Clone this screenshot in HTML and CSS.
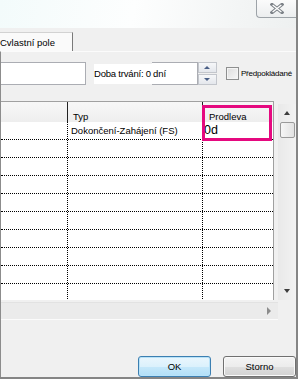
FILE: index.html
```html
<!DOCTYPE html>
<html lang="cs">
<head>
  <meta charset="UTF-8" />
  <title>Závislost úkolů</title>
  <link rel="stylesheet" href="styles.css">
</head>
<body>
  <div class="window">
    <div class="titlebar">
      <button class="close">
        <svg width="14" height="11" viewBox="0 0 14 11">
          <path d="M2 1.5 L12 9.5 M12 1.5 L2 9.5" stroke="#7d8288" stroke-width="3.4" stroke-linecap="square" />
          <path d="M2.6 2 L11.4 9 M11.4 2 L2.6 9" stroke="#ffffff" stroke-width="1.3" />
        </svg>
      </button>
    </div>

    <div class="tabs">
      <div class="tab">Cvlastní pole</div>
    </div>

    <div class="panel">
      <div class="fields">
        <div class="textbox wide"></div>
        <span class="label">Doba trvání: 0</span>
        <div class="textbox duration">dní</div>
        <div class="spinner">
          <span class="spin"><i class="tri up"></i></span>
          <span class="spin"><i class="tri down"></i></span>
        </div>
        <label class="check"><span class="box"></span>Předpokládané</label>
      </div>

      <div class="grid">
        <div class="grid-main">
          <div class="table">
            <div class="row head">
              <div class="cell"></div>
              <div class="cell">Typ</div>
              <div class="cell">Prodleva</div>
            </div>
            <div class="body">
              <div class="row">
                <div class="cell"></div>
                <div class="cell">Dokončení-Zahájení (FS)</div>
                <div class="cell lag">0d</div>
              </div>
              <div class="row"><div class="cell"></div><div class="cell"></div><div class="cell"></div></div>
              <div class="row"><div class="cell"></div><div class="cell"></div><div class="cell"></div></div>
              <div class="row"><div class="cell"></div><div class="cell"></div><div class="cell"></div></div>
              <div class="row"><div class="cell"></div><div class="cell"></div><div class="cell"></div></div>
              <div class="row"><div class="cell"></div><div class="cell"></div><div class="cell"></div></div>
              <div class="row"><div class="cell"></div><div class="cell"></div><div class="cell"></div></div>
              <div class="row"><div class="cell"></div><div class="cell"></div><div class="cell"></div></div>
              <div class="row"><div class="cell"></div><div class="cell"></div><div class="cell"></div></div>
              <div class="row"><div class="cell"></div><div class="cell"></div><div class="cell"></div></div>
            </div>
          </div>
          <div class="vscroll">
            <span class="sb-btn"><i class="arrow up"></i></span>
            <span class="thumb"></span>
            <span class="sb-track"></span>
            <span class="sb-btn"><i class="arrow down"></i></span>
          </div>
        </div>
        <div class="hscroll">
          <span class="sb-btn"><i class="arrow right"></i></span>
        </div>
        <div class="highlight"></div>
      </div>

      <div class="buttons">
        <button class="btn ok">OK</button>
        <button class="btn">Storno</button>
      </div>
    </div>
  </div>
</body>
</html>
```

FILE: styles.css
```css
:root {
  --face: #f0f0f0;
  --edge: #858585;
  --field-border: #abadb3;
  --pink: #e5097f;
}

body {
  margin: 0;
  font-family: 'Liberation Sans', Arial, sans-serif;
  font-size: 9.5px;
  color: #000;
  background: var(--face);
}

.window {
  width: 298px;
  height: 379px;
  box-sizing: border-box;
  border-right: 2px solid var(--edge);
  border-bottom: 2px solid var(--edge);
  overflow: hidden;
  background: var(--face);
}

/* titulek */
.titlebar {
  height: 28px;
  display: flex;
  justify-content: flex-end;
  align-items: flex-start;
  background: linear-gradient(100deg, #f3fbfb 0%, #fdfefe 45%, #f3f5f5 80%, #eef0f0 100%);
}

.close {
  width: 40px;
  height: 18px;
  padding: 0;
  border: 1px solid #9da3a8;
  border-top: none;
  border-right: none;
  border-radius: 0 0 0 4px;
  background: linear-gradient(#fbfbfb, #eceeef);
  display: flex;
  align-items: center;
  justify-content: center;
}

/* záložky */
.tabs {
  height: 23px;
  display: flex;
  align-items: flex-end;
  background: var(--face);
}

.tab {
  width: 73px;
  height: 19px;
  box-sizing: border-box;
  padding: 4px 0 0 0;
  background: #fafafa;
  border-top: 1px solid #d2d2d2;
  border-right: 1px solid #7a7a7a;
  white-space: nowrap;
}

.panel {
  border-top: 1px solid #fbfbfb;
  border-left: 1px solid #8c8c8c;
  padding-top: 10px;
}

/* pole */
.fields {
  display: flex;
  align-items: center;
  height: 23px;
}

.textbox {
  height: 23px;
  box-sizing: border-box;
  border: 1px solid var(--field-border);
  background: #fff;
}

.textbox.wide {
  width: 85px;
  border-left: none;
}

.label {
  margin-left: 8px;
  padding-right: 1px;
  height: 20px;
  line-height: 20px;
  background: #fff;
  white-space: nowrap;
  letter-spacing: -0.2px;
}

.textbox.duration {
  width: 46px;
  line-height: 21px;
  border-left: none;
  padding-left: 1px;
}

.spinner {
  width: 19px;
  height: 23px;
  display: flex;
  flex-direction: column;
  gap: 1px;
}

.spin {
  flex: 1;
  border: 1px solid #c3c6cc;
  background: linear-gradient(#f6f7f9, #e4e7ec);
  display: flex;
  align-items: center;
  justify-content: center;
}

.tri {
  width: 0;
  height: 0;
  border-left: 3px solid transparent;
  border-right: 3px solid transparent;
}

.tri.up { border-bottom: 3px solid #4a5f86; }
.tri.down { border-top: 3px solid #4a5f86; }

.check {
  display: flex;
  align-items: center;
  margin-left: 9px;
  font-size: 8px;
  white-space: nowrap;
  letter-spacing: -0.2px;
}

.check .box {
  width: 13px;
  height: 13px;
  box-sizing: border-box;
  margin-right: 2px;
  border: 1px solid #8e8f8f;
  background: linear-gradient(135deg, #dcdcdc, #f7f7f7);
  box-shadow: inset 0 0 0 1px #f4f4f4;
}

/* mřížka */
.grid {
  position: relative;
  margin-top: 16px;
}

.grid-main {
  display: flex;
}

.table {
  width: 272px;
  border-top: 1px solid #a0a0a0;
  border-right: 1px solid #a0a0a0;
  background: #fff;
}

.row {
  display: grid;
  grid-template-columns: 67px 135px 1fr;
  height: 18px;
  box-sizing: border-box;
  border-bottom: 1px dotted #000;
}

.row .cell {
  border-right: 1px dotted #000;
  padding-left: 3px;
  line-height: 18px;
  white-space: nowrap;
  overflow: hidden;
}

.row .cell:last-child {
  border-right: none;
}

.row.head {
  height: 20px;
  border-bottom: none;
  background: linear-gradient(#f7f7f7, #eeeeee);
}

.row.head .cell {
  border-right: 1px solid #222;
  padding-left: 5px;
  line-height: 29px;
}

.row.head .cell:last-child {
  border-right: none;
  padding-left: 6px;
}

.body {
  height: 178px;
  overflow: hidden;
}

.cell.lag {
  font-size: 12.5px;
  padding-left: 1px;
  line-height: 16px;
}

.vscroll {
  width: 18px;
  margin-left: 4px;
  margin-top: 3px;
  display: flex;
  flex-direction: column;
  background: linear-gradient(90deg, #e9e9e9, #f2f2f2);
}

.sb-btn {
  height: 18px;
  display: flex;
  align-items: center;
  justify-content: center;
}

.sb-track {
  flex: 1;
}

.thumb {
  height: 14px;
  margin: 0 1px 0 2px;
  border: 1px solid #9a9a9a;
  border-radius: 2px;
  background: linear-gradient(90deg, #f6f6f6, #e2e2e2);
}

.arrow {
  width: 0;
  height: 0;
}

.arrow.up {
  border-left: 3px solid transparent;
  border-right: 3px solid transparent;
  border-bottom: 4px solid #3c3c3c;
}

.arrow.down {
  border-left: 3px solid transparent;
  border-right: 3px solid transparent;
  border-top: 4px solid #3c3c3c;
}

.arrow.right {
  border-top: 4px solid transparent;
  border-bottom: 4px solid transparent;
  border-left: 4px solid #8c8c8c;
}

.hscroll {
  width: 277px;
  height: 16px;
  margin-top: 2px;
  display: flex;
  justify-content: flex-end;
  background: #ebebeb;
  border-top: 1px solid #e2e2e2;
  border-bottom: 1px solid #fbfbfb;
}

.hscroll .sb-btn {
  width: 18px;
  height: 16px;
}

.highlight {
  position: absolute;
  left: 201px;
  top: 4px;
  width: 70px;
  height: 36px;
  box-sizing: border-box;
  border: 3px solid var(--pink);
}

/* tlačítka */
.buttons {
  display: flex;
  justify-content: flex-end;
  gap: 12px;
  margin-top: 36px;
}

.btn {
  width: 73px;
  height: 21px;
  padding: 0;
  font-family: inherit;
  font-size: 9.5px;
  color: #000;
  border-radius: 3px;
  border: 1px solid #707070;
  background: linear-gradient(#f4f4f4 0%, #ececec 50%, #dfdfdf 51%, #d2d2d2 100%);
  box-shadow: inset 0 0 0 1px #fafafa;
}

.btn.ok {
  border-color: #3c7fb1;
  background: linear-gradient(#eaf6fd 0%, #dbf1fc 50%, #c6e8fa 51%, #b1dff7 100%);
  box-shadow: inset 0 0 0 1px #b8e2f8;
}
```
